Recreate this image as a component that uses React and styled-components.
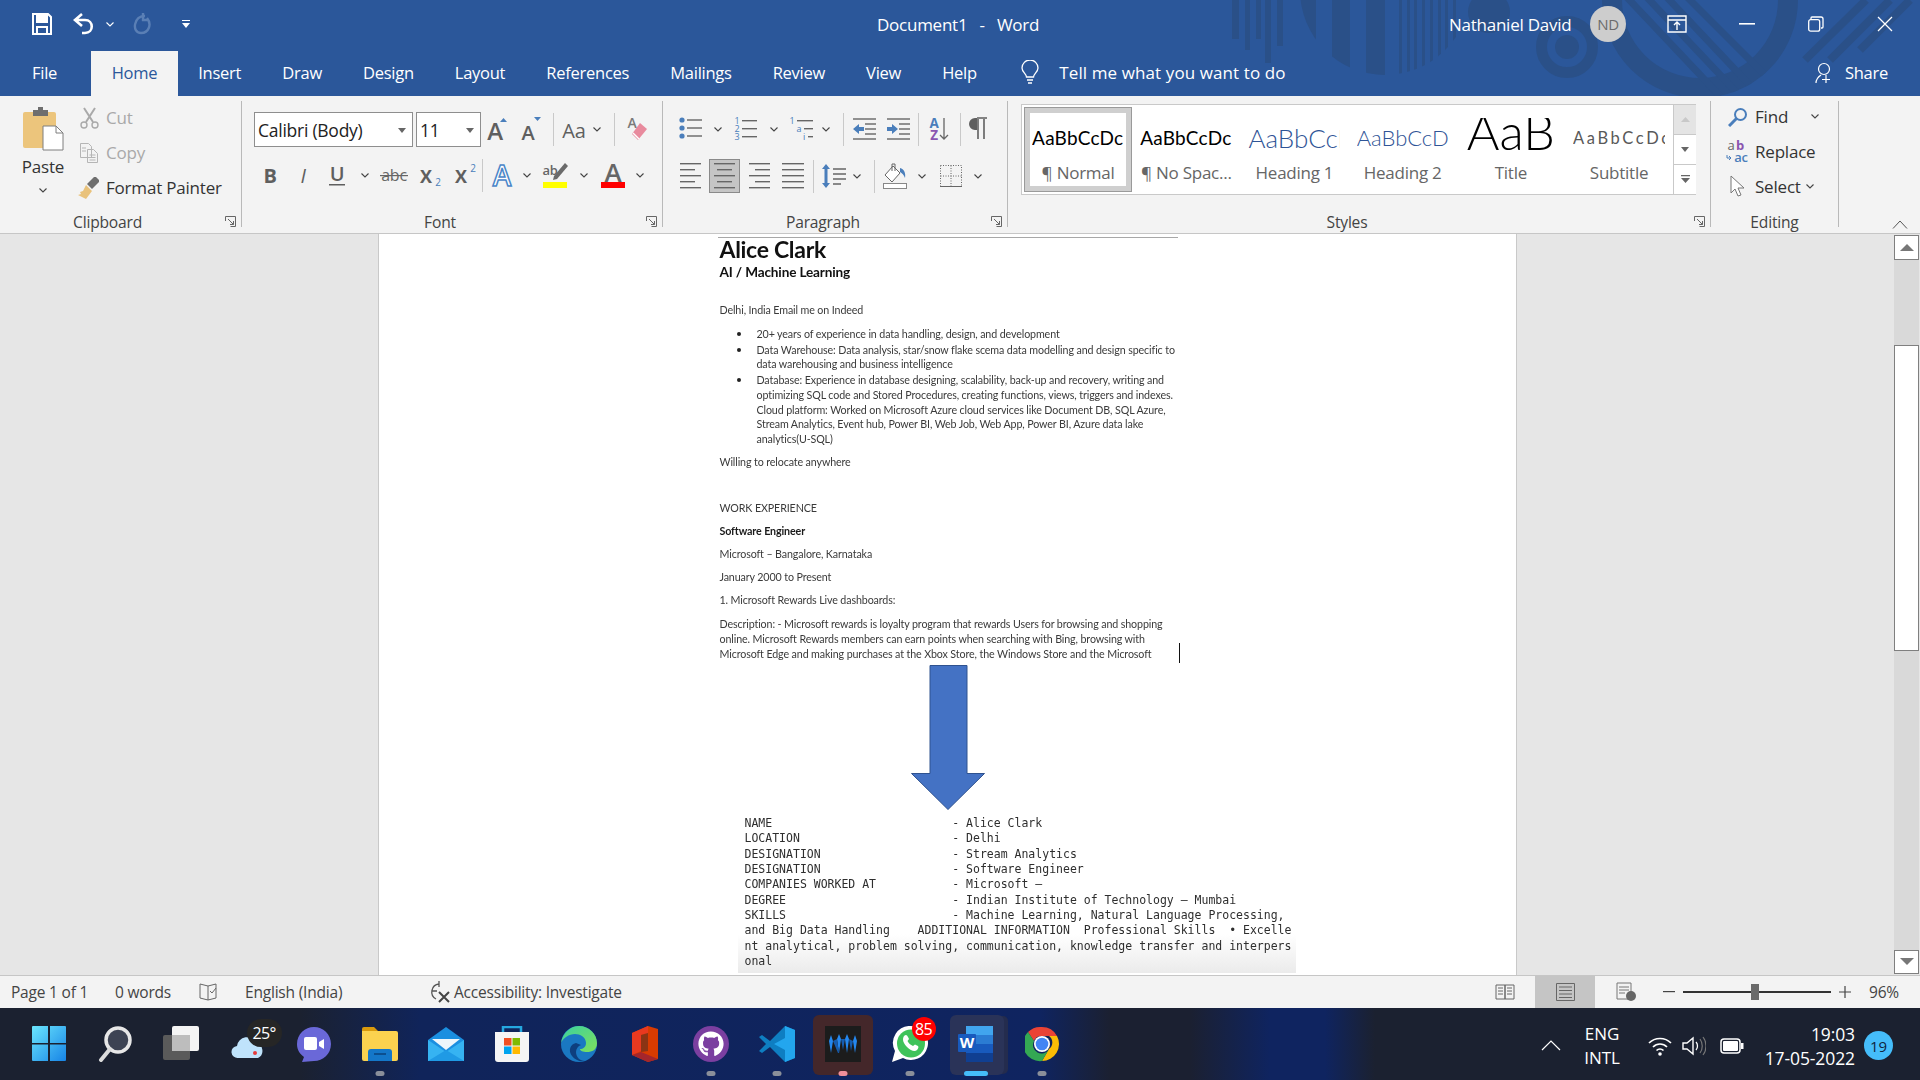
import React from 'react'
import styled, { createGlobalStyle } from 'styled-components'
import { FaGithub } from 'react-icons/fa'

const GlobalStyle = createGlobalStyle`
  html, body { margin: 0; padding: 0; width: 1920px; height: 1080px; overflow: hidden; background: #f3f3f3; }
  * { box-sizing: border-box; }
  body { font-family: "Open Sans", "Noto Sans", sans-serif; }
`

const Screen = styled.div`
  width: 1920px;
  height: 1080px;
  display: flex;
  flex-direction: column;
  overflow: hidden;
`

/* ---------- title bar + tabs ---------- */

const Header = styled.header`
  position: relative;
  height: 96px;
  flex: none;
  background: #2b579a;
  color: #fff;
  font-size: 16.5px;
  letter-spacing: -0.25px;
`
const Art = styled.svg`
  position: absolute;
  inset: 0;
`
const TitleRow = styled.div`
  position: relative;
  height: 51px;
  display: flex;
  align-items: center;
  padding-bottom: 3px;
`
const Quick = styled.div`
  width: 877px;
  flex: none;
  display: flex;
  align-items: center;
  padding-left: 31px;
`
const QuickCell = styled.div`
  width: ${p => p.$w}px;
  margin-left: ${p => p.$ml || 0}px;
  flex: none;
  display: flex;
  justify-content: center;
`
const DocTitle = styled.div`
  width: 572px;
  flex: none;
  font-size: 17px;
  word-spacing: 8px;
`
const UserName = styled.div`
  width: 141px;
  flex: none;
  font-size: 17px;
`
const Avatar = styled.div`
  width: 36px;
  height: 36px;
  border-radius: 50%;
  background: #cdcdcd;
  color: #6b6b6b;
  font-size: 15px;
  display: flex;
  align-items: center;
  justify-content: center;
  flex: none;
`
const WinBtn = styled.div`
  flex: none;
  width: ${p => p.$w}px;
  margin-left: ${p => p.$ml}px;
  display: flex;
  justify-content: center;
`
const TabRow = styled.nav`
  position: relative;
  height: 45px;
  display: flex;
  align-items: stretch;
  padding-left: 12px;
`
const Tab = styled.div`
  padding: ${p => p.$pad || '0 20.5px'};
  display: flex;
  align-items: center;
  padding-bottom: 2px;
  color: ${p => (p.$active ? '#2b579a' : '#fff')};
  background: ${p => (p.$active ? '#f3f3f3' : 'transparent')};
`
const TellMe = styled.div`
  display: flex;
  align-items: center;
  gap: 20px;
  margin-left: 24px;
  padding-bottom: 3px;
  font-size: 17px;
  letter-spacing: 0.1px;
`
const Share = styled.div`
  margin-left: auto;
  margin-right: 32px;
  display: flex;
  align-items: center;
  gap: 12px;
  padding-bottom: 2px;
`

/* ---------- ribbon ---------- */

const Ribbon = styled.section`
  position: relative;
  height: 138px;
  flex: none;
  display: flex;
  padding-top: 5px;
  background: #f3f3f3;
  border-bottom: 1px solid #c6c6c6;
  color: #444;
  font-size: 17px;
  letter-spacing: -0.2px;
`
const Group = styled.div`
  position: relative;
  width: ${p => p.$w}px;
  height: 126px;
  flex: none;
  display: flex;
  flex-direction: column;
  border-right: 1px solid #b9b9b9;
`
const GroupBody = styled.div`
  flex: 1;
  min-height: 0;
  display: ${p => (p.$row ? 'flex' : 'block')};
  padding: ${p => p.$pad || '0'};
`
const GroupLabel = styled.div`
  height: 20px;
  margin-bottom: -5px;
  line-height: 20px;
  text-align: center;
  font-size: 15.6px;
  color: #444;
  padding-right: ${p => p.$pr || 0}px;
`
const Launcher = styled.svg`
  position: absolute;
  right: 5px;
  bottom: 0;
`
const PasteCol = styled.div`
  width: 76px;
  margin-left: 5px;
  padding-top: 6px;
  flex: none;
  display: flex;
  flex-direction: column;
  align-items: center;
  color: #333;
`
const PasteLabel = styled.div`
  line-height: 20px;
  margin-top: 6px;
  margin-bottom: 11px;
`
const SmallCol = styled.div`
  flex: none;
  margin-top: ${p => p.$mt || 0}px;
`
const SmallRow = styled.div`
  height: 35px;
  display: flex;
  align-items: center;
  color: ${p => (p.$off ? '#a9a9a9' : '#333')};
`
const SmallIcon = styled.div`
  width: ${p => p.$w || 25}px;
  padding: ${p => p.$pad || '0'};
  flex: none;
  display: flex;
  justify-content: center;
  & > svg { flex: none; }
`
const ToolRow = styled.div`
  height: 34px;
  display: flex;
  align-items: center;
  margin-top: ${p => p.$mt || 0}px;
`
const Tool = styled.div`
  width: ${p => p.$w}px;
  height: 34px;
  flex: none;
  display: flex;
  align-items: center;
  justify-content: center;
  background: ${p => (p.$on ? '#c5c5c5' : 'transparent')};
  border: ${p => (p.$on ? '1px solid #8a8a8a' : 'none')};
`
const Sep = styled.div`
  width: 1px;
  height: 33px;
  flex: none;
  background: #c9c9c9;
`
const Combo = styled.div`
  width: ${p => p.$w}px;
  height: 35px;
  flex: none;
  margin-right: ${p => p.$mr || 0}px;
  background: #fff;
  border: 1px solid #8e8e8e;
  display: flex;
  align-items: center;
  justify-content: space-between;
  padding: 2px 6px 0 3px;
  color: #222;
  font-size: 17.5px;
  letter-spacing: -0.25px;
`
const Caret = styled.div`
  width: 0;
  height: 0;
  border-left: 4px solid transparent;
  border-right: 4px solid transparent;
  border-top: 5px solid #666;
`
const Gallery = styled.div`
  margin: 3px 0 0 13px;
  width: 675px;
  height: 91px;
  background: #fff;
  border: 1px solid #c9c9c9;
  padding: 2px 0 2px 2px;
  display: flex;
`
const StyleItem = styled.div`
  width: 108.2px;
  flex: none;
  display: flex;
  flex-direction: column;
  align-items: center;
  border: 6px solid ${p => (p.$on ? '#cfcfcf' : 'transparent')};
  outline: ${p => (p.$on ? '1px solid #9a9a9a' : 'none')};
  outline-offset: -1px;
`
const SampleBox = styled.div`
  width: 92px;
  height: 47px;
  margin-top: 1px;
  overflow: hidden;
  display: flex;
  align-items: center;
  justify-content: ${p => (p.$center ? 'center' : 'flex-start')};
  white-space: nowrap;
  padding-bottom: ${p => (p.$title ? 14 : 0)}px;
  clip-path: ${p => (p.$title ? 'inset(4px 0 0 0)' : 'none')};
  font-family: Lato, "Liberation Sans", sans-serif;
  font-size: ${p => p.$size}px;
  font-weight: ${p => p.$weight || 400};
  color: ${p => p.$color || '#000'};
  letter-spacing: ${p => p.$ls ?? 0}px;
`
const StyleName = styled.div`
  line-height: 20px;
  margin-top: 2px;
  color: #666;
  font-size: 17px;
  letter-spacing: -0.25px;
  white-space: nowrap;
`
const GalleryScroll = styled.div`
  width: 23px;
  margin: -2px 0 -2px auto;
  flex: none;
  border-left: 1px solid #c9c9c9;
  display: flex;
  flex-direction: column;
`
const ScrollStep = styled.div`
  flex: 1;
  display: flex;
  align-items: center;
  justify-content: center;
  background: ${p => (p.$off ? '#e4e4e4' : '#fff')};
  border-bottom: ${p => (p.$last ? 'none' : '1px solid #c9c9c9')};
`
const Collapse = styled.svg`
  position: absolute;
  right: 12px;
  bottom: 4px;
`

/* ---------- document ---------- */

const DocArea = styled.main`
  flex: 1;
  min-height: 0;
  display: flex;
  background: #e6e6e6;
`
const PageWrap = styled.div`
  flex: 1;
  display: flex;
  justify-content: center;
  overflow: hidden;
`
const Page = styled.div`
  width: 1139px;
  height: 100%;
  background: #fff;
  padding: 3px 0 0 339px;
  border-left: 1px solid #c9c9c9;
  border-right: 1px solid #c9c9c9;
`
const Resume = styled.div`
  position: relative;
  width: 460px;
  height: 428px;
  border-top: 1px solid #a8a8a8;
  padding-left: 2px;
  font-family: Lato, "Liberation Sans", sans-serif;
  font-size: 10.7px;
  letter-spacing: -0.12px;
  color: #3a3a3a;
`
const BlurText = styled.div`
  filter: blur(0.25px);
`
const Name = styled.div`
  font-size: 23px;
  font-weight: 700;
  line-height: 22px;
  color: #111;
  letter-spacing: -0.3px;
`
const Role = styled.div`
  font-size: 13.6px;
  font-weight: 700;
  line-height: 16px;
  margin-top: 4px;
  color: #111;
  letter-spacing: -0.15px;
`
const Line = styled.div`
  line-height: 15px;
  margin-top: ${p => p.$mt ?? 8}px;
  white-space: nowrap;
  font-weight: ${p => (p.$bold ? 700 : 400)};
  color: ${p => (p.$bold ? '#1a1a1a' : 'inherit')};
`
const Bullets = styled.ul`
  list-style: none;
  margin: 10px 0 0;
  padding: 0 0 0 37px;
`
const Bullet = styled.li`
  position: relative;
  line-height: 14.7px;
  margin-bottom: 1px;
  white-space: pre;
  &::before {
    content: '';
    position: absolute;
    left: -20px;
    top: 5px;
    width: 4px;
    height: 4px;
    border-radius: 50%;
    background: #222;
  }
`
const DenseLines = styled.div`
  margin-top: 9px;
  line-height: 15px;
  white-space: pre;
`
const TextCaret = styled.div`
  position: absolute;
  right: -2px;
  top: 405px;
  width: 1px;
  height: 20px;
  background: #111;
`
const ArrowSvg = styled.svg`
  display: block;
  margin-left: 193px;
`
const MonoBlock = styled.div`
  width: 558px;
  height: 163px;
  margin-left: 20px;
  padding: 6px 0 0 7px;
  background: linear-gradient(180deg, #fff 0, #fff 76%, #ebebeb 100%);
  font-family: "DejaVu Sans Mono", "Liberation Mono", monospace;
  font-size: 11.5px;
  line-height: 15.33px;
  color: #2e2e2e;
  white-space: pre;
  filter: blur(0.25px);
`
const VScroll = styled.aside`
  width: 26px;
  flex: none;
  padding: 1px 1px 1px 0;
  display: flex;
  flex-direction: column;
`
const ScrollBtn = styled.div`
  height: 24.5px;
  flex: none;
  background: #fff;
  border: 1px solid #7f7f7f;
  display: flex;
  align-items: center;
  justify-content: center;
`
const ScrollTrack = styled.div`
  flex: 1;
  background: #d9d9d9;
  padding-top: 85px;
`
const ScrollThumb = styled.div`
  height: 306px;
  background: #fff;
  border: 1px solid #7f7f7f;
`

/* ---------- status bar ---------- */

const StatusBar = styled.footer`
  height: 33px;
  flex: none;
  display: flex;
  align-items: center;
  padding-right: 20px;
  background: #f3f3f3;
  border-top: 1px solid #c6c6c6;
  color: #444;
  font-size: 15.5px;
  letter-spacing: -0.2px;
`
const StatusText = styled.div`
  flex: none;
  width: ${p => p.$w}px;
  padding-left: ${p => p.$pl || 0}px;
  margin-left: ${p => p.$ml || 0}px;
  white-space: nowrap;
`
const ViewBtn = styled.div`
  width: ${p => p.$w}px;
  height: 32px;
  flex: none;
  margin-left: ${p => p.$ml || 0};
  display: flex;
  align-items: center;
  justify-content: center;
  background: ${p => (p.$on ? '#c5c5c5' : 'transparent')};
`
const Zoom = styled.div`
  position: relative;
  width: 148px;
  height: 2px;
  margin: 0 8px;
  flex: none;
  background: #333;
`
const ZoomThumb = styled.div`
  position: absolute;
  left: 68px;
  top: -7px;
  width: 8px;
  height: 16px;
  background: #6a6a6a;
`

/* ---------- taskbar ---------- */

const Taskbar = styled.div`
  height: 72px;
  flex: none;
  display: flex;
  align-items: flex-start;
  padding: 7px 0 0 16px;
  color: #fff;
  background: linear-gradient(90deg, #1b2130 0, #1b2130 300px, #10245a 420px, #0f2460 1040px, #1b2031 1110px, #1b2031 1190px, #0f2460 1270px, #0f2460 1325px, #1b2130 1375px, #1b2130 100%);
`
const Slot = styled.div`
  position: relative;
  width: 66.2px;
  height: 60px;
  flex: none;
  display: flex;
  align-items: center;
  justify-content: center;
  padding-bottom: 3px;
`
const SlotBg = styled.div`
  position: absolute;
  top: 0;
  left: ${p => p.$l}px;
  width: ${p => p.$w}px;
  height: 60px;
  border-radius: 6px;
  background: ${p => p.$bg};
  box-shadow: ${p => p.$shadow || 'none'};
`
const Pill = styled.div`
  position: absolute;
  left: 50%;
  bottom: -1px;
  transform: translateX(-50%);
  width: ${p => p.$w || 9}px;
  height: 5px;
  border-radius: 3px;
  background: ${p => p.$c || '#8a8f9a'};
`
const IconLayer = styled.div`
  position: relative;
  display: flex;
`
const WeatherBadge = styled.div`
  position: absolute;
  left: 16px;
  top: -7px;
  width: 35px;
  height: 28px;
  border-radius: 14px;
  background: #262626;
  font-size: 16px;
  letter-spacing: -0.6px;
  display: flex;
  align-items: center;
  justify-content: center;
`
const CountBadge = styled.div`
  position: absolute;
  right: -8px;
  top: -9px;
  width: 24px;
  height: 24px;
  border-radius: 50%;
  background: #f00;
  font-size: 16px;
  letter-spacing: -0.6px;
  display: flex;
  align-items: center;
  justify-content: center;
`
const Tray = styled.div`
  margin-left: auto;
  height: 61px;
  display: flex;
  align-items: center;
  padding-right: 27px;
  font-size: 16px;
  letter-spacing: -0.1px;
`
const TrayCell = styled.div`
  flex: none;
  width: ${p => p.$w}px;
  margin-left: ${p => p.$ml || 0}px;
  display: flex;
  justify-content: center;
`
const Lang = styled.div`
  width: 50px;
  flex: none;
  margin-left: 16px;
  line-height: 24px;
  text-align: center;
  font-size: 17px;
`
const Clock = styled.div`
  flex: none;
  width: 100px;
  margin-left: 11px;
  line-height: 24px;
  text-align: right;
  font-size: 17.5px;
`
const NotifyDot = styled.div`
  width: 29px;
  height: 29px;
  margin-left: 9px;
  flex: none;
  border-radius: 50%;
  background: #45bdfa;
  color: #10253f;
  font-size: 15px;
  display: flex;
  align-items: center;
  justify-content: center;
`

/* ---------- icons ---------- */

const Chev = ({ c = '#444' }) => (
  <svg width="8" height="5" viewBox="0 0 8 5" style={{ flex: 'none', overflow: 'visible' }}>
    <path d="M.5.5 4 4 7.5.5" fill="none" stroke={c} strokeWidth="1.1" />
  </svg>
)
const Dialog = () => (
  <Launcher width="11" height="11" viewBox="0 0 11 11">
    <path d="M.5 5V.5H10.5V10.5H5.5M3 3l5.5 5.5M8.5 5v3.5H5" fill="none" stroke="#666" />
  </Launcher>
)
const Lines = ({ rows, w = 22 }) => (
  <svg width={w} height={rows.length * 6} viewBox={`0 0 ${w} ${rows.length * 6}`}>
    {rows.map(([x, l], i) => <rect key={i} x={x} y={i * 6 + 2} width={l} height="1.4" fill="#666" />)}
  </svg>
)
const SaveIcon = () => (
  <svg width="20" height="24" viewBox="0 0 20 24">
    <path d="M1 2h15l3 3v17H1z" fill="none" stroke="#fff" strokeWidth="2" />
    <rect x="4" y="2" width="12" height="9" fill="#fff" />
    <rect x="5" y="15" width="10" height="7" fill="none" stroke="#fff" strokeWidth="2" />
  </svg>
)
const Undo = ({ c = '#fff' }) => (
  <svg width="22" height="24" viewBox="0 0 22 24">
    <path d="M9 2 2 8l7 6M3 8h9c9 0 9 13 0 13H9" fill="none" stroke={c} strokeWidth="2.6" />
  </svg>
)
const Redo = () => (
  <svg width="20" height="24" viewBox="0 0 20 24">
    <path d="M13 4C2 3-1 21 9 21c8 0 11-9 6-15M11 1v7h6" fill="none" stroke="#5a7fb5" strokeWidth="2.4" />
  </svg>
)
const PasteIcon = () => (
  <svg width="42" height="44" viewBox="0 0 42 44">
    <rect x="1" y="5" width="33" height="36" rx="2" fill="#ecc57c" />
    <path d="M11 3h5V0h5v3h5v6H11z" fill="#6e6e6e" />
    <path d="M21 19h13l7 7v17H21z" fill="#fff" stroke="#7f7f7f" />
    <path d="M34 19v7h7" fill="none" stroke="#7f7f7f" />
  </svg>
)
const Scissors = () => (
  <svg width="19" height="22" viewBox="0 0 19 22">
    <path d="M4 1l9 14M15 1 6 15" stroke="#a9a9a9" strokeWidth="2" fill="none" />
    <circle cx="4" cy="18" r="3" fill="none" stroke="#a9a9a9" strokeWidth="1.4" />
    <circle cx="15" cy="18" r="3" fill="none" stroke="#a9a9a9" strokeWidth="1.4" />
  </svg>
)
const CopyIcon = () => (
  <svg width="20" height="22" viewBox="0 0 20 22" fill="none" stroke="#b5b5b5">
    <path d="M1.5 1.5h8l3 3v11h-11zM8.5 7.500h6l4 4v9h-10z" fill="#f3f3f3" />
    <path d="M10.500 13h6M10.500 15.500h6M10.500 18h6M3 6h4M3 9h4" />
  </svg>
)
const Painter = () => (
  <svg width="24" height="26" viewBox="0 0 24 26">
    <path d="M9 10l6 6-6 8-8-4 3-1-1-2 3-1z" fill="#e9c27b" />
    <path d="M10 9l7-7 2 0 3 3 0 2-7 7z" fill="#6e6e6e" />
  </svg>
)
const TextIcon = ({ children, size = 24, weight = 700, color = '#5f5f5f', italic, w = 22, h = 24 }) => (
  <svg width={w} height={h} viewBox={`0 0 ${w} ${h}`} style={{ overflow: 'visible' }}>
    <text x={w / 2} y={h - 4} textAnchor="middle" fontFamily="Open Sans, sans-serif" fontStyle={italic ? 'italic' : 'normal'} fontSize={size} fontWeight={weight} fill={color}>{children}</text>
  </svg>
)
const GrowFont = ({ size, up }) => (
  <svg width="24" height="26" viewBox="0 0 24 26" style={{ overflow: 'visible' }}>
    <text x="9" y="24" textAnchor="middle" fontFamily="Open Sans, sans-serif" fontSize={size} fontWeight="600" fill="#5f5f5f">A</text>
    <path d={up ? 'M14 6l3.500-4 3.500 4z' : 'M15 1h7l-3.500 4z'} fill="#4a7ebb" />
  </svg>
)
const Eraser = () => (
  <svg width="22" height="28" viewBox="0 0 22 28" style={{ overflow: 'visible' }}>
    <text x="6" y="13" textAnchor="middle" fontFamily="Open Sans, sans-serif" fontSize="14" fontWeight="600" fill="#7a7a7a">A</text>
    <path d="M14 8l7 6-9 11-6-6z" fill="#e88a9d" />
    <path d="M7 18l6 6" stroke="#fff" strokeWidth="1.4" />
  </svg>
)
const Strike = () => (
  <svg width="28" height="22" viewBox="0 0 28 22" style={{ overflow: 'visible' }}>
    <text x="14" y="17" textAnchor="middle" fontFamily="Open Sans, sans-serif" fontSize="16" fill="#666">abc</text>
    <rect x="0" y="11" width="28" height="1.2" fill="#666" />
  </svg>
)
const SubSup = ({ sup }) => (
  <svg width="24" height="24" viewBox="0 0 24 24" style={{ overflow: 'visible' }}>
    <text x="8" y="20" textAnchor="middle" fontFamily="Open Sans, sans-serif" fontSize="18" fontWeight="700" fill="#5f5f5f">X</text>
    <text x="20" y={sup ? 9 : 23} textAnchor="middle" fontFamily="Open Sans, sans-serif" fontSize="10" fill="#4a7ebb">2</text>
  </svg>
)
const OutlineA = () => (
  <svg width="26" height="28" viewBox="0 0 26 28" style={{ overflow: 'visible' }}>
    <text x="13" y="25" textAnchor="middle" fontFamily="Open Sans, sans-serif" fontSize="28" fontWeight="600" fill="#fff" stroke="#4a86c8" strokeWidth="1.5">A</text>
  </svg>
)
const Highlight = () => (
  <svg width="26" height="30" viewBox="0 0 26 30" style={{ overflow: 'visible' }}>
    <text x="7" y="15" textAnchor="middle" fontFamily="Open Sans, sans-serif" fontSize="13" fontWeight="600" fill="#666">ab</text>
    <path d="M22 3l3 3-11 13-4 1 1-4z" fill="#6a6a6a" />
    <rect x="0" y="22" width="24" height="6" fill="#ff0" />
  </svg>
)
const ColorA = () => (
  <svg width="24" height="30" viewBox="0 0 24 30" style={{ overflow: 'visible' }}>
    <text x="12" y="22" textAnchor="middle" fontFamily="Open Sans, sans-serif" fontSize="26" fontWeight="600" fill="#666">A</text>
    <rect x="0" y="22" width="24" height="6" fill="#f00" />
  </svg>
)
const ListBullets = () => (
  <svg width="24" height="24" viewBox="0 0 24 24">
    {[3, 11, 19].map(y => <g key={y}><circle cx="3" cy={y} r="2.600" fill="#4a7ebb" /><rect x="8" y={y - .7} width="15" height="1.400" fill="#666" /></g>)}
  </svg>
)
const ListNum = () => (
  <svg width="24" height="26" viewBox="0 0 24 26" style={{ overflow: 'visible' }}>
    {['1', '2', '3'].map((n, i) => (
      <g key={n}>
        <text x="3" y={8 + i * 8} textAnchor="middle" fontSize="9" fontFamily="Open Sans, sans-serif" fill="#4a7ebb">{n}</text>
        <rect x="8" y={4 + i * 8} width="15" height="1.400" fill="#666" />
      </g>
    ))}
  </svg>
)
const ListMulti = () => (
  <svg width="24" height="26" viewBox="0 0 24 26" style={{ overflow: 'visible' }}>
    <text x="2" y="8" textAnchor="middle" fontSize="9" fontFamily="Open Sans, sans-serif" fill="#4a7ebb">1</text>
    <text x="9" y="16" textAnchor="middle" fontSize="9" fontFamily="Open Sans, sans-serif" fill="#4a7ebb">a</text>
    <text x="14" y="24" textAnchor="middle" fontSize="9" fontFamily="Open Sans, sans-serif" fill="#4a7ebb">i</text>
    <rect x="7" y="4" width="16" height="1.400" fill="#666" />
    <rect x="14" y="12" width="9" height="1.400" fill="#666" />
    <rect x="18" y="20" width="5" height="1.400" fill="#666" />
  </svg>
)
const Indent = ({ out }) => (
  <svg width="23" height="22" viewBox="0 0 23 22">
    {[1, 6, 11, 16, 21].map((y, i) => <rect key={y} x={i === 0 || i === 4 ? 0 : 12} y={y - .7} width={i === 0 || i === 4 ? 23 : 11} height="1.400" fill="#666" />)}
    <path d={out ? 'M0 11l6-5v3h5v4H6v3z' : 'M11 11 5 6v3H0v4h5v3z'} fill="#4a7ebb" />
  </svg>
)
const Sort = () => (
  <svg width="22" height="24" viewBox="0 0 22 24" style={{ overflow: 'visible' }}>
    <text x="6" y="11" textAnchor="middle" fontSize="13.500" fontWeight="700" fontFamily="Open Sans, sans-serif" fill="#4a7ebb">A</text>
    <text x="6" y="23" textAnchor="middle" fontSize="13.500" fontWeight="700" fontFamily="Open Sans, sans-serif" fill="#8a55b0">Z</text>
    <path d="M16 1v21M12 18l4 4 4-4" fill="none" stroke="#666" strokeWidth="1.300" />
  </svg>
)
const Pilcrow = () => (
  <svg width="18" height="24" viewBox="0 0 18 24">
    <path d="M10 1H6a6 6 0 0 0 0 12h2V1z" fill="#5f5f5f" />
    <path d="M8 1h10M9 2v20M15 2v20" fill="none" stroke="#5f5f5f" strokeWidth="1.600" />
  </svg>
)
const LineSpacing = () => (
  <svg width="24" height="24" viewBox="0 0 24 24">
    <path d="M4 0 8 5H5.500v14H8l-4 5-4-5h2.500V5H0z" fill="#4a7ebb" />
    <path d="M11 5h13M11 10h13M11 15h13M11 20h8" stroke="#666" strokeWidth="1.300" />
  </svg>
)
const Shading = () => (
  <svg width="24" height="26" viewBox="0 0 24 26">
    <path d="M10 3 2 12l7 7 8-9z" fill="#fff" stroke="#666" />
    <path d="M9 8V1h3v7" fill="none" stroke="#666" />
    <path d="M17 5c4 1 6 5 5 10-1-3-3-5-5-6z" fill="#4a7ebb" />
    <rect x=".5" y="20.500" width="23" height="5" fill="#fff" stroke="#888" />
  </svg>
)
const Borders = () => (
  <svg width="22" height="22" viewBox="0 0 22 22">
    <path d="M.5.500h21v21M.5.500v21M11 .5v21M.5 11h21" fill="none" stroke="#666" strokeDasharray="1 1.500" />
    <path d="M0 21.500h22" stroke="#666" />
  </svg>
)
const Bulb = () => (
  <svg width="18" height="24" viewBox="0 0 18 24">
    <path d="M5.500 17c0-3-4.500-5-4.500-9a8 8 0 0 1 16 0c0 4-4.500 6-4.500 9zM6 20h6M7 23h4" fill="none" stroke="#fff" strokeWidth="1.300" />
  </svg>
)
const ShareIcon = () => (
  <svg width="18" height="22" viewBox="0 0 18 22">
    <circle cx="9" cy="7" r="5.500" fill="none" stroke="#fff" strokeWidth="1.200" />
    <path d="M1 21c0-4 2-6 5-8M11 13v8M7 17.500h8" fill="none" stroke="#fff" strokeWidth="1.200" />
  </svg>
)
const Magnifier = () => (
  <svg width="20" height="20" viewBox="0 0 20 20">
    <circle cx="12.500" cy="7.500" r="5.500" fill="none" stroke="#4a7ebb" strokeWidth="2" />
    <path d="M8.500 11.500 1 19" stroke="#4a7ebb" strokeWidth="3" />
  </svg>
)
const ReplaceIcon = () => (
  <svg width="24" height="24" viewBox="0 0 24 24" style={{ overflow: 'visible' }}>
    <text x="5" y="10" textAnchor="middle" fontSize="13" fontFamily="Open Sans, sans-serif" fill="#666">a</text>
    <text x="14" y="10" textAnchor="middle" fontSize="13" fontWeight="700" fontFamily="Open Sans, sans-serif" fill="#8a55b0">b</text>
    <text x="15" y="22" textAnchor="middle" fontSize="13" fontWeight="600" fontFamily="Open Sans, sans-serif" fill="#4a7ebb">ac</text>
    <path d="M1 15v3h4M3 16l2 2-2 2" fill="none" stroke="#4a7ebb" />
  </svg>
)
const Pointer = () => (
  <svg width="16" height="24" viewBox="0 0 16 24">
    <path d="M1 1v17l4-4 3 7 3-1-3-7h6z" fill="#fff" stroke="#777" />
  </svg>
)

const Windows = () => (
  <svg width="34" height="35" viewBox="0 0 34 35">
    <defs><linearGradient id="w" x1="0" y1="0" x2="1" y2="1"><stop offset="0" stopColor="#6be6fd" /><stop offset="1" stopColor="#1784e6" /></linearGradient></defs>
    <path d="M0 1a1 1 0 0 1 1-1h15v17H0zM18 0h15a1 1 0 0 1 1 1v16H18zM0 18.500h16V35H1a1 1 0 0 1-1-1zM18 18.500h16V34a1 1 0 0 1-1 1H18z" fill="url(#w)" />
  </svg>
)
const SearchApp = () => (
  <svg width="34" height="36" viewBox="0 0 34 36">
    <circle cx="20" cy="14" r="12" fill="#3d4353" stroke="#e7e7e7" strokeWidth="3.500" />
    <path d="M12 23 3 34" stroke="#dcdcdc" strokeWidth="4" strokeLinecap="round" />
  </svg>
)
const TaskView = () => (
  <svg width="36" height="36" viewBox="0 0 36 36">
    <rect x="9" y="0" width="27" height="25" rx="2" fill="#f4f4f4" />
    <rect x="0" y="9" width="27" height="25" rx="2" fill="#5a5a5a" />
    <rect x="9" y="9" width="18" height="16" fill="#bdbdbd" />
  </svg>
)
const Weather = () => (
  <IconLayer>
    <svg width="34" height="36" viewBox="0 0 34 36">
      <path d="M7 32a6 6 0 0 1-1-12 10 10 0 0 1 19-3 8 8 0 0 1 2 15z" fill="#bfe3fb" />
      <circle cx="24" cy="27" r="2" fill="#e53b3b" />
    </svg>
    <WeatherBadge>25°</WeatherBadge>
  </IconLayer>
)
const Teams = () => (
  <svg width="34" height="36" viewBox="0 0 34 36">
    <path d="M17 1c9 0 17 7 17 17s-8 17-17 17c-4 0-8 1-12 1l2-5C3 28 0 24 0 18 0 8 8 1 17 1z" fill="#6a68d8" />
    <rect x="7" y="11" width="13" height="13" rx="2" fill="#fff" />
    <path d="M22 16l5-3v10l-5-3z" fill="#fff" />
  </svg>
)
const Folder = () => (
  <svg width="36" height="34" viewBox="0 0 36 34">
    <path d="M0 2a2 2 0 0 1 2-2h10l4 4H0z" fill="#d99a0c" />
    <path d="M0 4h34a2 2 0 0 1 2 2v26a2 2 0 0 1-2 2H2a2 2 0 0 1-2-2z" fill="#fbd24f" />
    <path d="M6 34V25a3 3 0 0 1 3-3h18a3 3 0 0 1 3 3v9z" fill="#1477c9" />
    <rect x="12" y="26" width="12" height="2" fill="#0c4f8f" />
  </svg>
)
const Mail = () => (
  <svg width="36" height="34" viewBox="0 0 36 34">
    <path d="M18 0 36 13v21H0V13z" fill="#1a8fe0" />
    <path d="M4 12h28L18 23z" fill="#eef6fb" />
    <path d="M0 13l18 12 18-12v21H0z" fill="#36b3f2" />
    <path d="M0 34l18-11 18 11z" fill="#1f9ae5" />
  </svg>
)
const Store = () => (
  <svg width="36" height="36" viewBox="0 0 36 36">
    <path d="M9 6V1h18v5" fill="none" stroke="#25a8e0" strokeWidth="2.500" />
    <path d="M1 6h34v27a3 3 0 0 1-3 3H4a3 3 0 0 1-3-3z" fill="#f5f5f5" />
    <rect x="10" y="12" width="7.500" height="7.500" fill="#f25022" />
    <rect x="18.500" y="12" width="7.500" height="7.500" fill="#7fba00" />
    <rect x="10" y="20.500" width="7.500" height="7.500" fill="#00a4ef" />
    <rect x="18.500" y="20.500" width="7.500" height="7.500" fill="#ffb900" />
  </svg>
)
const Edge = () => (
  <svg width="36" height="36" viewBox="0 0 36 36">
    <defs>
      <linearGradient id="e1" x1="0" y1="0" x2="1" y2="1"><stop offset="0" stopColor="#3ad0a0" /><stop offset="1" stopColor="#7ee05c" /></linearGradient>
    </defs>
    <circle cx="18" cy="18" r="18" fill="#1a78c2" />
    <path d="M0 17C2 6 10 0 18 0c10 0 18 8 18 17 0 7-5 9-10 9-4 0-7-1-7-3 3 0 6-2 6-6 0-6-6-9-11-9C8 8 2 12 0 17z" fill="url(#e1)" />
    <path d="M15 17c-6 1-8 8-4 13 3 4 8 6 13 5-5 0-9-4-9-9 0-3 2-6 5-7z" fill="#0e3f7e" />
  </svg>
)
const Office = () => (
  <svg width="26" height="36" viewBox="0 0 26 36">
    <path d="M16 0 0 7v22l16 7 10-3V3z" fill="#d83b01" />
    <path d="M16 0 0 7v22l9-4V9l7-2z" fill="#e8391f" />
    <path d="M9 9v17l7-1V7z" fill="#2c2c2c" opacity=".45" />
    <path d="M0 29l16 7 10-3-17-7z" fill="#a4262c" />
  </svg>
)
const GithubApp = () => (
  <svg width="36" height="36" viewBox="0 0 36 36">
    <circle cx="18" cy="18" r="18" fill="#7b3fa0" />
    <foreignObject x="5" y="5" width="26" height="26"><FaGithub size={26} color="#fff" /></foreignObject>
  </svg>
)
const VsCode = () => (
  <svg width="36" height="36" viewBox="0 0 36 36">
    <path d="M26 0 11 15 3 9 0 11l7 7-7 7 3 2 8-6 15 15 10-4V4z" fill="#0e7ec2" />
    <path d="M26 0l10 4v28l-10 4V24L15 18l11-6z" fill="#23a6ee" />
  </svg>
)
const WavesApp = () => (
  <svg width="36" height="36" viewBox="0 0 36 36">
    <rect width="36" height="36" fill="#1c1c1c" />
    <path d="M4 15l2-6 2 6-2 12zM12 13l2-5 2 5-2 14zM20 13l2-5 2 5-2 14zM28 15l2-6 2 6-2 12z" fill="#2488f0" />
    <path d="M8 15l4-2 2 14-1 0zM16 13l4 0-2 11zM24 13l4 2-2 10z" fill="#155cb0" />
  </svg>
)
const Whatsapp = () => (
  <IconLayer>
    <svg width="36" height="36" viewBox="0 0 36 36">
      <path d="M19 0a17 17 0 1 1-8 32L0 36l3-11A17 17 0 0 1 19 0z" fill="#fff" />
      <circle cx="19" cy="17.500" r="14" fill="#3fc35a" />
      <path d="M12 10c2-2 3-1 4 1l1 2-1.500 2c1 2 3 4 5.500 5l2-1.500 3 1.500c1 1 0 3-1 4-2 2-6 1-10-3s-5-8-3-11z" fill="#fff" />
    </svg>
    <CountBadge>85</CountBadge>
  </IconLayer>
)
const WordApp = () => (
  <svg width="36" height="36" viewBox="0 0 36 36" style={{ overflow: 'visible' }}>
    <rect x="8" y="0" width="27" height="9" fill="#41a5ee" />
    <rect x="8" y="9" width="27" height="9" fill="#2b7cd3" />
    <rect x="8" y="18" width="27" height="9" fill="#185abd" />
    <rect x="8" y="27" width="27" height="9" fill="#103f91" />
    <rect x="0" y="8" width="18" height="18" rx="1" fill="#185abd" />
    <text x="9" y="22" textAnchor="middle" fontSize="15" fontWeight="700" fontFamily="Open Sans, sans-serif" fill="#fff">W</text>
  </svg>
)
const Chrome = () => (
  <svg width="34" height="36" viewBox="0 0 34 36">
    <path d="M17 1a17 17 0 0 1 15 9H17a8 8 0 0 0-8 5L3 6A17 17 0 0 1 17 1z" fill="#ea4335" />
    <path d="M32 10a17 17 0 0 1-15 25l7-12a8 8 0 0 0 0-13z" fill="#fbbc05" />
    <path d="M3 6l6 9a8 8 0 0 0 15 8l-7 12A17 17 0 0 1 3 6z" fill="#34a853" />
    <circle cx="17" cy="18" r="8" fill="#fff" />
    <circle cx="17" cy="18" r="6.300" fill="#4285f4" />
  </svg>
)

const tabs = ['Insert', 'Draw', 'Design', 'Layout', 'References', 'Mailings', 'Review', 'View', 'Help']

const samples = [
  { name: '¶ Normal', text: 'AaBbCcDc', size: 19, ls: 0.2, on: true },
  { name: '¶ No Spac...', text: 'AaBbCcDc', size: 19, ls: 0.2 },
  { name: 'Heading 1', text: 'AaBbCcDc', size: 26, color: '#2f5496', weight: 300 },
  { name: 'Heading 2', text: 'AaBbCcDc', size: 22, color: '#2f5496', weight: 300 },
  { name: 'Title', text: 'AaB', size: 50, weight: 300, center: true, title: true },
  { name: 'Subtitle', text: 'AaBbCcDc', size: 16.5, color: '#595959', ls: 2.6 },
]

const bullets = [
  '20+ years of experience in data handling, design, and development',
  'Data Warehouse: Data analysis, star/snow flake scema data modelling and design specific to\ndata warehousing and business intelligence',
  'Database: Experience in database designing, scalability, back-up and recovery, writing and\noptimizing SQL code and Stored Procedures, creating functions, views, triggers and indexes.\nCloud platform: Worked on Microsoft Azure cloud services like Document DB, SQL Azure,\nStream Analytics, Event hub, Power BI, Web Job, Web App, Power BI, Azure data lake\nanalytics(U-SQL)',
]

const monoLines = `NAME                          - Alice Clark
LOCATION                      - Delhi
DESIGNATION                   - Stream Analytics
DESIGNATION                   - Software Engineer
COMPANIES WORKED AT           - Microsoft –
DEGREE                        - Indian Institute of Technology – Mumbai
SKILLS                        - Machine Learning, Natural Language Processing,
and Big Data Handling    ADDITIONAL INFORMATION  Professional Skills  • Excelle
nt analytical, problem solving, communication, knowledge transfer and interpers
onal`

const HeaderArt = () => (
  <Art width="1920" height="96" viewBox="0 0 1920 96">
    <defs>
      <clipPath id="disk"><circle cx="1385" cy="-10" r="85" /></clipPath>
      <clipPath id="bigDisk"><circle cx="1700" cy="0" r="98" /></clipPath>
    </defs>
    <g fill="#2a5088">
      <rect x="1232" y="0" width="7" height="39" />
      <rect x="1245" y="0" width="5" height="50" />
      <rect x="1256" y="0" width="5" height="39" />
      <rect x="1265" y="0" width="6" height="63" />
      <rect x="1277" y="0" width="6" height="46" />
      <g clipPath="url(#disk)">
        <rect x="1300" y="0" width="16" height="96" />
        <rect x="1332" y="0" width="18" height="96" />
        <rect x="1366" y="0" width="19" height="96" />
        {[1399, 1407, 1414, 1422, 1430, 1438, 1445, 1453].map(x => <rect key={x} x={x} y="0" width="3" height="96" />)}
      </g>
      <circle cx="1489" cy="12" r="21" />
      <circle cx="1567" cy="47" r="12" />
    </g>
    <circle cx="1567" cy="47" r="25.500" fill="none" stroke="#2a5088" strokeWidth="11" />
    <circle cx="1700" cy="0" r="88" fill="none" stroke="#2a5088" strokeWidth="20" />
    <g clipPath="url(#bigDisk)" stroke="#2a5088" strokeWidth="7">
      <path d="M1620-10 1720 96M1640-10 1740 96M1660-10 1760 96M1680-10 1780 90" />
    </g>
    <path d="M1805 60 1866 0M1830 60 1890 0M1860 50 1910 0" stroke="#2a5088" strokeWidth="8" />
  </Art>
)

export default function App() {
  return (
    <Screen>
      <GlobalStyle />
      <Header>
        <HeaderArt />
        <TitleRow>
          <Quick>
            <QuickCell $w={21}><SaveIcon /></QuickCell>
            <QuickCell $w={24} $ml={20}><Undo /></QuickCell>
            <QuickCell $w={28}><Chev c="#fff" /></QuickCell>
            <QuickCell $w={20} $ml={8}><Redo /></QuickCell>
            <QuickCell $w={16} $ml={26}>
              <svg width="8" height="9" viewBox="0 0 8 9"><path d="M0 0h8v1H0zM0 3h8L4 8z" fill="#fff" /></svg>
            </QuickCell>
          </Quick>
          <DocTitle>Document1 - Word</DocTitle>
          <UserName>Nathaniel David</UserName>
          <Avatar>ND</Avatar>
          <WinBtn $w={20} $ml={41}>
            <svg width="20" height="18" viewBox="0 0 20 18"><path d="M1 1h18v16H1zM1 5h18" fill="none" stroke="#fff" strokeWidth="1.400" /><path d="M10 15V8M7 10l3-3 3 3" fill="none" stroke="#fff" strokeWidth="1.400" /></svg>
          </WinBtn>
          <WinBtn $w={16} $ml={52}><svg width="16" height="2" viewBox="0 0 16 2"><rect width="16" height="1.600" fill="#fff" /></svg></WinBtn>
          <WinBtn $w={16} $ml={53}><svg width="16" height="16" viewBox="0 0 16 16"><path d="M3 3V2a1 1 0 0 1 1-1h9a2 2 0 0 1 2 2v8a1 1 0 0 1-1 1h-1" fill="none" stroke="#fff" strokeWidth="1.300" /><rect x=".7" y="3.700" width="11" height="11.500" rx="2" fill="none" stroke="#fff" strokeWidth="1.300" /></svg></WinBtn>
          <WinBtn $w={16} $ml={53}><svg width="16" height="16" viewBox="0 0 16 16"><path d="M1 1l14 14M15 1 1 15" stroke="#fff" strokeWidth="1.300" /></svg></WinBtn>
        </TitleRow>
        <TabRow>
          <Tab $pad="0 34px 0 20px">File</Tab>
          <Tab $active>Home</Tab>
          {tabs.map(t => <Tab key={t}>{t}</Tab>)}
          <TellMe><Bulb /><span>Tell me what you want to do</span></TellMe>
          <Share><ShareIcon /><span>Share</span></Share>
        </TabRow>
      </Header>

      <Ribbon>
        <Group $w={242}>
          <GroupBody $row>
            <PasteCol>
              <PasteIcon />
              <PasteLabel>Paste</PasteLabel>
              <Chev />
            </PasteCol>
            <SmallCol $mt={-1}>
              <SmallRow $off><SmallIcon $pad="0 9px 0 0"><Scissors /></SmallIcon>Cut</SmallRow>
              <SmallRow $off><SmallIcon $pad="0 9px 0 0"><CopyIcon /></SmallIcon>Copy</SmallRow>
              <SmallRow><SmallIcon $pad="0 9px 0 0"><Painter /></SmallIcon>Format Painter</SmallRow>
            </SmallCol>
          </GroupBody>
          <GroupLabel $pr={26}>Clipboard</GroupLabel>
          <Dialog />
        </Group>

        <Group $w={421}>
          <GroupBody $pad="11px 0 0 12px">
            <ToolRow>
              <Combo $w={159} $mr={3}>Calibri (Body)<Caret /></Combo>
              <Combo $w={65}>11<Caret /></Combo>
              <Tool $w={33}><GrowFont size={24} up /></Tool>
              <Tool $w={34}><GrowFont size={20} /></Tool>
              <Tool $w={5} />
              <Sep />
              <Tool $w={40}><TextIcon size={20} weight={400} w={28} h={26}>Aa</TextIcon></Tool>
              <Tool $w={6}><Chev /></Tool>
              <Tool $w={14} />
              <Sep />
              <Tool $w={44}><Eraser /></Tool>
            </ToolRow>
            <ToolRow $mt={12}>
              <Tool $w={32}><TextIcon size={20}>B</TextIcon></Tool>
              <Tool $w={34}><TextIcon size={20} weight={400} italic>I</TextIcon></Tool>
              <Tool $w={34}>
                <svg width="18" height="24" viewBox="0 0 18 24" style={{ overflow: 'visible' }}>
                  <text x="9" y="18" textAnchor="middle" fontFamily="Open Sans, sans-serif" fontSize="20" fontWeight="600" fill="#5f5f5f">U</text>
                  <rect x="1" y="21" width="16" height="1.500" fill="#5f5f5f" />
                </svg>
              </Tool>
              <Tool $w={22}><Chev /></Tool>
              <Tool $w={36}><Strike /></Tool>
              <Tool $w={36}><SubSup /></Tool>
              <Tool $w={34}><SubSup sup /></Tool>
              <Sep />
              <Tool $w={37}><OutlineA /></Tool>
              <Tool $w={13}><Chev /></Tool>
              <Tool $w={46}><Highlight /></Tool>
              <Tool $w={10}><Chev /></Tool>
              <Tool $w={48}><ColorA /></Tool>
              <Tool $w={6}><Chev /></Tool>
            </ToolRow>
          </GroupBody>
          <GroupLabel $pr={24}>Font</GroupLabel>
          <Dialog />
        </Group>

        <Group $w={345}>
          <GroupBody $pad="11px 0 0 0">
            <ToolRow>
              <Tool $w={8} />
              <Tool $w={40}><ListBullets /></Tool>
              <Tool $w={14}><Chev /></Tool>
              <Tool $w={42}><ListNum /></Tool>
              <Tool $w={14}><Chev /></Tool>
              <Tool $w={42}><ListMulti /></Tool>
              <Tool $w={6}><Chev /></Tool>
              <Tool $w={14} />
              <Sep />
              <Tool $w={40}><Indent out /></Tool>
              <Tool $w={28}><Indent /></Tool>
              <Tool $w={6} />
              <Sep />
              <Tool $w={40}><Sort /></Tool>
              <Tool $w={1} />
              <Sep />
              <Tool $w={34}><Pilcrow /></Tool>
            </ToolRow>
            <ToolRow $mt={13}>
              <Tool $w={9} />
              <Tool $w={37}><Lines rows={[[0, 21], [0, 15], [0, 21], [0, 15], [0, 21]]} /></Tool>
              <Tool $w={31} $on><Lines rows={[[0, 21], [3, 15], [0, 21], [3, 15], [0, 21]]} /></Tool>
              <Tool $w={38}><Lines rows={[[1, 21], [7, 15], [1, 21], [7, 15], [1, 21]]} /></Tool>
              <Tool $w={29}><Lines rows={[[0, 22], [0, 22], [0, 22], [0, 22], [0, 22]]} /></Tool>
              <Tool $w={6} />
              <Sep />
              <Tool $w={39}><LineSpacing /></Tool>
              <Tool $w={8}><Chev /></Tool>
              <Tool $w={13} />
              <Sep />
              <Tool $w={40}><Shading /></Tool>
              <Tool $w={14}><Chev /></Tool>
              <Tool $w={43}><Borders /></Tool>
              <Tool $w={12}><Chev /></Tool>
            </ToolRow>
          </GroupBody>
          <GroupLabel $pr={24}>Paragraph</GroupLabel>
          <Dialog />
        </Group>

        <Group $w={703}>
          <GroupBody>
            <Gallery>
              {samples.map(s => (
                <StyleItem key={s.name} $on={s.on}>
                  <SampleBox $size={s.size} $color={s.color} $weight={s.weight} $ls={s.ls} $center={s.center} $title={s.title}>{s.text}</SampleBox>
                  <StyleName>{s.name}</StyleName>
                </StyleItem>
              ))}
              <GalleryScroll>
                <ScrollStep $off><svg width="9" height="5" viewBox="0 0 9 5"><path d="M4.500 0 9 5H0z" fill="#c8c8c8" /></svg></ScrollStep>
                <ScrollStep><Caret /></ScrollStep>
                <ScrollStep $last>
                  <svg width="9" height="9" viewBox="0 0 9 9"><path d="M0 0h9v1.200H0zM0 3h9L4.500 8z" fill="#666" /></svg>
                </ScrollStep>
              </GalleryScroll>
            </Gallery>
          </GroupBody>
          <GroupLabel $pr={24}>Styles</GroupLabel>
          <Dialog />
        </Group>

        <Group $w={128}>
          <GroupBody>
            <SmallCol $mt={-2}>
              <SmallRow><SmallIcon $w={44} $pad="0 0 0 10px"><Magnifier /></SmallIcon>Find<SmallIcon $w={54}><Chev /></SmallIcon></SmallRow>
              <SmallRow><SmallIcon $w={44} $pad="0 0 0 10px"><ReplaceIcon /></SmallIcon>Replace</SmallRow>
              <SmallRow><SmallIcon $w={44} $pad="0 0 0 10px"><Pointer /></SmallIcon>Select<SmallIcon $w={18}><Chev /></SmallIcon></SmallRow>
            </SmallCol>
          </GroupBody>
          <GroupLabel>Editing</GroupLabel>
        </Group>
        <Collapse width="16" height="9" viewBox="0 0 16 9"><path d="M1 8.500 8 1l7 7.500" fill="none" stroke="#555" /></Collapse>
      </Ribbon>

      <DocArea>
        <PageWrap>
          <Page>
            <Resume>
              <BlurText>
                <Name>Alice Clark</Name>
                <Role>AI / Machine Learning</Role>
                <Line $mt={22}>Delhi, India Email me on Indeed</Line>
                <Bullets>
                  {bullets.map(b => <Bullet key={b}>{b}</Bullet>)}
                </Bullets>
                <Line $mt={7}>Willing to relocate anywhere</Line>
                <Line $mt={31}>WORK EXPERIENCE</Line>
                <Line $bold>Software Engineer</Line>
                <Line>Microsoft – Bangalore, Karnataka</Line>
                <Line>January 2000 to Present</Line>
                <Line>1. Microsoft Rewards Live dashboards:</Line>
                <DenseLines>{'Description: - Microsoft rewards is loyalty program that rewards Users for browsing and shopping\nonline. Microsoft Rewards members can earn points when searching with Bing, browsing with\nMicrosoft Edge and making purchases at the Xbox Store, the Windows Store and the Microsoft'}</DenseLines>
              </BlurText>
              <TextCaret />
            </Resume>
            <ArrowSvg width="74" height="145" viewBox="0 0 74 145">
              <path d="M19 .5h37v108h17.500L37 144.500.5 108.500H19z" fill="#4472c4" stroke="#2f528f" />
            </ArrowSvg>
            <MonoBlock>{monoLines}</MonoBlock>
          </Page>
        </PageWrap>
        <VScroll>
          <ScrollBtn><svg width="14" height="7" viewBox="0 0 14 7"><path d="M7 0l7 7H0z" fill="#777" /></svg></ScrollBtn>
          <ScrollTrack><ScrollThumb /></ScrollTrack>
          <ScrollBtn><svg width="14" height="7" viewBox="0 0 14 7"><path d="M7 7 14 0H0z" fill="#777" /></svg></ScrollBtn>
        </VScroll>
      </DocArea>

      <StatusBar>
        <StatusText $w={115} $pl={11}>Page 1 of 1</StatusText>
        <StatusText $w={70}>0 words</StatusText>
        <ViewBtn $w={46}>
          <svg width="20" height="18" viewBox="0 0 20 18"><path d="M10 3 2 1v14l8 2zM10 3l8-2v14l-8 2M12 8l2 2 4-5" fill="none" stroke="#666" /></svg>
        </ViewBtn>
        <StatusText $w={183} $ml={14}>English (India)</StatusText>
        <ViewBtn $w={26}>
          <svg width="22" height="24" viewBox="0 0 22 24"><path d="M9 4a8 8 0 0 0-3 15M9 1v6M2 11h5" fill="none" stroke="#555" strokeWidth="1.300" /><path d="M9 12l10 10M19 12 9 22" stroke="#444" strokeWidth="2" /></svg>
        </ViewBtn>
        <StatusText $w={200}>Accessibility: Investigate</StatusText>
        <ViewBtn $w={20} $ml="auto">
          <svg width="20" height="18" viewBox="0 0 20 18"><path d="M10 2H1v14h9zM10 2h9v14h-9zM3 5h5M3 8h5M3 11h5M12 5h5M12 8h5M12 11h5" fill="none" stroke="#666" /></svg>
        </ViewBtn>
        <ViewBtn $w={60} $on $ml="20px">
          <svg width="19" height="18" viewBox="0 0 19 18"><path d="M.5.500h18v17H.5zM3 4h13M3 7.500h13M3 11h13M3 14.500h13" fill="none" stroke="#666" /></svg>
        </ViewBtn>
        <ViewBtn $w={20} $ml="21px">
          <svg width="20" height="20" viewBox="0 0 20 20"><path d="M1 1h14v16H1zM3 5h10M3 8h10M3 11h6" fill="none" stroke="#777" /><circle cx="15" cy="14" r="5" fill="#666" /></svg>
        </ViewBtn>
        <ViewBtn $w={12} $ml="27px"><svg width="12" height="2" viewBox="0 0 12 2"><rect width="12" height="1.200" fill="#444" /></svg></ViewBtn>
        <Zoom><ZoomThumb /></Zoom>
        <ViewBtn $w={12}><svg width="12" height="12" viewBox="0 0 12 12"><path d="M0 6h12M6 0v12" stroke="#444" strokeWidth="1.200" /></svg></ViewBtn>
        <StatusText $w={49} $pl={18}>96%</StatusText>
      </StatusBar>

      <Taskbar>
        <Slot><Windows /></Slot>
        <Slot><SearchApp /></Slot>
        <Slot><TaskView /></Slot>
        <Slot><Weather /></Slot>
        <Slot><Teams /></Slot>
        <Slot><Folder /><Pill /></Slot>
        <Slot><Mail /></Slot>
        <Slot><Store /></Slot>
        <Slot><Edge /></Slot>
        <Slot><Office /></Slot>
        <Slot><GithubApp /><Pill /></Slot>
        <Slot><VsCode /><Pill /></Slot>
        <Slot><SlotBg $l={3} $w={60} $bg="#44272a" /><IconLayer><WavesApp /></IconLayer><Pill $c="#f08f9a" /></Slot>
        <Slot><Whatsapp /><Pill /></Slot>
        <Slot>
          <SlotBg $l={7} $w={54} $bg="#2a3358" $shadow="5px 0 0 -1px #242c4e" />
          <IconLayer><WordApp /></IconLayer>
          <Pill $w={24} $c="#45bdfa" />
        </Slot>
        <Slot><Chrome /><Pill /></Slot>
        <Tray>
          <TrayCell $w={20}><svg width="20" height="11" viewBox="0 0 20 11"><path d="M1 10 10 1l9 9" fill="none" stroke="#fff" strokeWidth="1.200" /></svg></TrayCell>
          <Lang>ENG<br />INTL</Lang>
          <TrayCell $w={24} $ml={21}>
            <svg width="24" height="20" viewBox="0 0 24 20"><path d="M1 7c6-6 16-6 22 0M5 11c4-4 10-4 14 0M8.500 14.500c2-2 5-2 7 0" fill="none" stroke="#fff" strokeWidth="1.700" /><circle cx="12" cy="18" r="1.800" fill="#fff" /></svg>
          </TrayCell>
          <TrayCell $w={24} $ml={10}>
            <svg width="24" height="20" viewBox="0 0 24 20"><path d="M1 7h4l6-5v16l-6-5H1z" fill="none" stroke="#fff" strokeWidth="1.400" /><path d="M14 6c2 2 2 6 0 8" fill="none" stroke="#fff" strokeWidth="1.300" /><path d="M18 3c3 4 3 10 0 14M21 1c4 5 4 13 0 18" fill="none" stroke="#777" strokeWidth="1.200" /></svg>
          </TrayCell>
          <TrayCell $w={24} $ml={14}>
            <svg width="24" height="16" viewBox="0 0 24 16"><rect x="1" y="1" width="19" height="14" rx="3" fill="none" stroke="#fff" strokeWidth="1.500" /><rect x="3" y="3" width="15" height="10" rx="1" fill="#fff" /><rect x="21" y="5" width="2.500" height="6" fill="#fff" /></svg>
          </TrayCell>
          <Clock>19:03<br />17-05-2022</Clock>
          <NotifyDot>19</NotifyDot>
        </Tray>
      </Taskbar>
    </Screen>
  )
}
